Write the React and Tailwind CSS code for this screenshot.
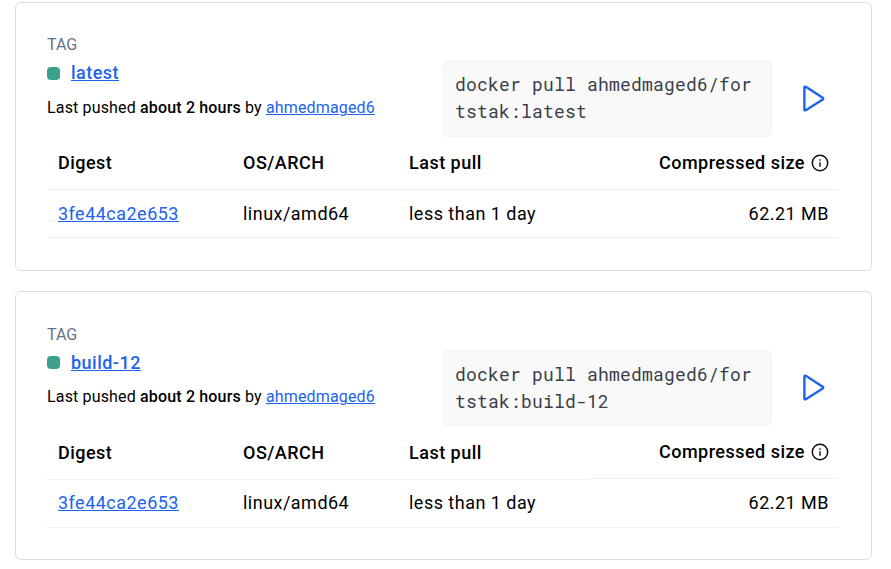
const link = "text-[#1d63ed] underline decoration-1 underline-offset-1";

function InfoIcon() {
  return (
    <svg className="h-[18px] w-[18px]" viewBox="0 0 18 18" fill="none" stroke="#111">
      <circle cx="9" cy="9" r="7.7" strokeWidth="1.5" />
      <path d="M9 8.2v4.6M9 5.2v1.6" strokeWidth="1.4" />
    </svg>
  );
}

function PlayIcon() {
  return (
    <svg className="h-[30px] w-[24px]" viewBox="0 0 24 30" fill="none" stroke="#1d63ed" strokeWidth="2.4" strokeLinejoin="round">
      <path d="M2.4 3.5v22c0 .8.8 1.1 1.4.7L20.7 15.4c.7-.5.7-1.2 0-1.7L3.8 2.8c-.6-.4-1.4-.1-1.4.7z" />
    </svg>
  );
}

function Card({ tag, second }) {
  return (
    <section className="h-[269px] w-[857px] shrink-0 rounded-md border border-[#dedee1] bg-white px-[31px]">
      <div className={second ? "flex h-[135px] justify-between" : "flex h-[134px] justify-between"}>
        <div className={second ? "pt-[33px]" : "pt-[32px]"}>
          <div className="h-5 text-[16px] leading-[20px] text-[#677285]">TAG</div>
          <div className={`${second ? "mt-[5px]" : "mt-[6px]"} flex items-center text-[18px] leading-6 font-medium tracking-[0.48px]`}>
            <span className="mr-[11px] h-[13px] w-[13px] rounded-[4px] bg-[#3ba08d]" />
            <a className={`${second ? "relative top-px" : ""} ${link}`}>{tag}</a>
          </div>
          <p className="mt-[13px] text-[16px] leading-5 tracking-[0.16px]">
            Last pushed <b className="font-medium">about 2 hours</b> by <a className={link}>ahmedmaged6</a>
          </p>
        </div>
        <div className={second ? "flex pt-[58px]" : "flex pt-[57px]"}>
          <code className={`${second ? "h-[76px]" : "h-[77px]"} block w-[329px] rounded-[5px] border border-[#f3f3f4] bg-[#f9f9fa] px-[11px] pt-[10px] font-['Roboto_Mono','DejaVu_Sans_Mono',monospace] text-[18px] leading-[27px] tracking-[0.2px] whitespace-nowrap text-[#393f49]`}>
            docker pull ahmedmaged6/for<br />tstak:{tag}
          </code>
          <div className={second ? "mt-[23px] mr-[14px] ml-[30px]" : "mt-[24px] mr-[14px] ml-[30px]"}>
            <PlayIcon />
          </div>
        </div>
      </div>
      <div className="w-[792px] text-[18px] leading-[24px] tracking-[0.48px]">
        <div className="grid h-[53px] grid-cols-[185px_166px_193px_1fr] items-start font-medium *:border-b *:border-[#f1f1f3] *:pt-[14px] *:pl-[11px]">
          <span className="h-[53px]">Digest</span>
          <span className="h-[53px]">OS/ARCH</span>
          <span className="h-[53px]">Last pull</span>
          <span className={`${second ? "-mt-px" : ""} flex h-[53px] items-start justify-end gap-[6px] pr-[10px] whitespace-nowrap`}>
            Compressed size
            <span className="mt-[3px]"><InfoIcon /></span>
          </span>
        </div>
        <div className={`${second ? "h-[48px] pb-px" : "h-[48px]"} grid grid-cols-[185px_166px_193px_1fr] items-center border-b border-[#f1f1f3] *:pl-[11px]`}>
          <span><a className={link}>3fe44ca2e653</a></span>
          <span>linux/amd64</span>
          <span>less than 1 day</span>
          <span className="pr-[10px] text-right">62.21 MB</span>
        </div>
      </div>
    </section>
  );
}

export default function App() {
  return (
    <main className="flex h-[569px] w-[891px] flex-col gap-5 overflow-hidden bg-white pt-[2px] pl-[15px] font-[Roboto,sans-serif] text-black">
      <Card tag="latest" />
      <Card tag="build-12" second />
    </main>
  );
}
